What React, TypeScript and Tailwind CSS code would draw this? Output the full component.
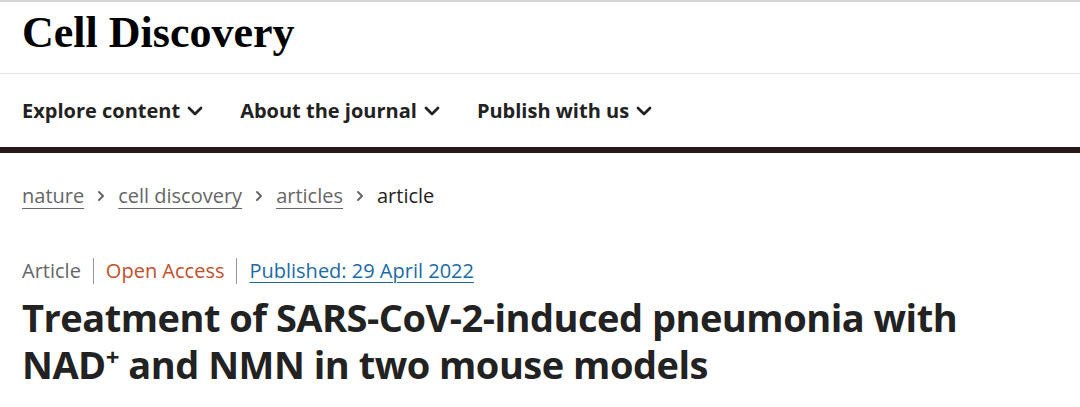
import { ChevronDown, ChevronRight } from "lucide-react";

const sans = "font-['Open_Sans',sans-serif]";

function NavItem({ label }: { label: string }) {
  return (
    <button className="flex items-center gap-[3px] text-[20px] font-bold text-[#222]">
      {label}
      <ChevronDown className="h-6 w-6" strokeWidth={2.75} />
    </button>
  );
}

function Crumb({ label }: { label: string }) {
  return (
    <>
      <a href="#" className="text-[#666] underline underline-offset-[5px] decoration-1">
        {label}
      </a>
      <ChevronRight className="h-4 w-4 text-[#666]" strokeWidth={3} />
    </>
  );
}

export default function App() {
  return (
    <div className={`min-h-screen bg-white ${sans}`}>
      <header className="border-t-2 border-[#d5d5d5]">
        <div className="flex h-[72px] items-center border-b border-[#e6e6e6] px-[22px] pb-[9px]">
          <h1 className="font-['Liberation_Serif',serif] text-[44px] font-bold leading-none text-black">
            Cell Discovery
          </h1>
        </div>
        <nav className="flex h-[73px] items-center gap-[33px] px-[22px]">
          <NavItem label="Explore content" />
          <NavItem label="About the journal" />
          <NavItem label="Publish with us" />
        </nav>
        <div className="h-[6px] bg-[#29191a]" />
      </header>

      <main className="px-[22px]">
        <div className="mt-[28px] flex items-center gap-[9px] text-[20px]">
          <Crumb label="nature" />
          <Crumb label="cell discovery" />
          <Crumb label="articles" />
          <span className="text-[#222]">article</span>
        </div>

        <div className="mt-[45px] flex items-center text-[20px]">
          <span className="text-[#666]">Article</span>
          <span className="mx-[12px] h-[26px] w-px bg-[#999]" />
          <span className="text-[#c0502a]">Open Access</span>
          <span className="mx-[12px] h-[26px] w-px bg-[#999]" />
          <a href="#" className="text-[#1b6aa5] underline underline-offset-[4px] decoration-1">
            Published: 29 April 2022
          </a>
        </div>

        <h2 className="mt-[8px] text-[38px] font-bold leading-[47px] tracking-[-0.5px] text-[#222]">
          Treatment of SARS-CoV-2-induced pneumonia with
          <br />
          NAD<span className="relative top-[-13px] text-[24px] leading-none">+</span> and NMN in two mouse
          models
        </h2>
      </main>
    </div>
  );
}
